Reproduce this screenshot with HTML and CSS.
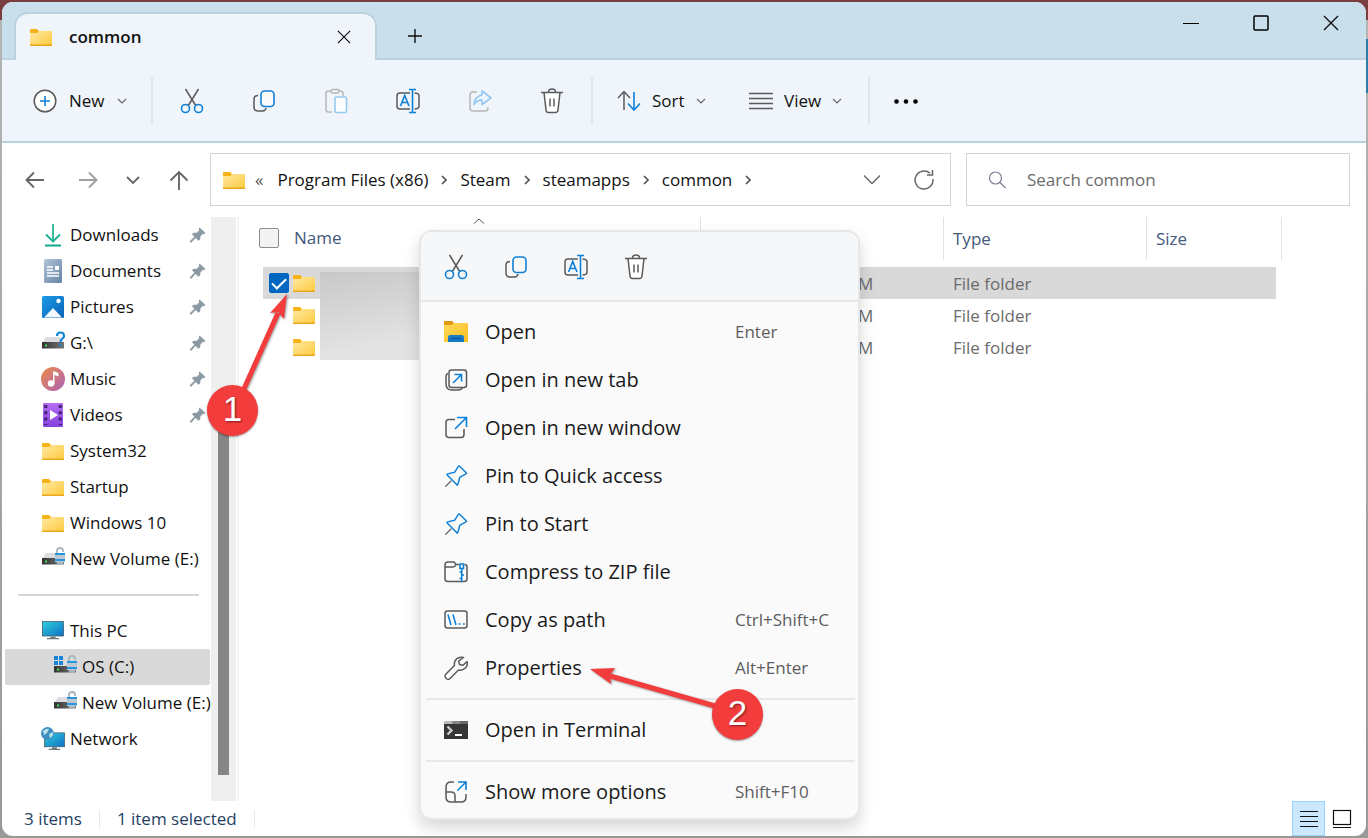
FILE: index.html
```html
<!DOCTYPE html>
<html lang="en">
<head>
<meta charset="utf-8">
<title>common</title>
<link rel="stylesheet" href="styles.css">
</head>
<body>
<svg class="sprite" aria-hidden="true">
  <defs>
    <linearGradient id="gFolder" x1="0" y1="0" x2="1" y2="1"><stop offset="0" stop-color="#ffe8a3"/><stop offset="1" stop-color="#fcca3c"/></linearGradient>
    <linearGradient id="gOpen" x1="0" y1="0" x2="1" y2="1"><stop offset="0" stop-color="#ffd95a"/><stop offset="1" stop-color="#f9bd22"/></linearGradient>
    <linearGradient id="gDoc" x1="0" y1="0" x2="1" y2="1"><stop offset="0" stop-color="#b4c6d8"/><stop offset="1" stop-color="#6484a6"/></linearGradient>
    <linearGradient id="gPic" x1="0" y1="0" x2="1" y2="1"><stop offset="0" stop-color="#1c9be8"/><stop offset="1" stop-color="#0a62b5"/></linearGradient>
    <linearGradient id="gMusic" x1="0" y1="0" x2="1" y2="1"><stop offset="0" stop-color="#f08a4b"/><stop offset="1" stop-color="#a863b4"/></linearGradient>
    <linearGradient id="gVideo" x1="0" y1="0" x2="0" y2="1"><stop offset="0" stop-color="#b56cf5"/><stop offset="1" stop-color="#8544dd"/></linearGradient>
    <linearGradient id="gScreen" x1="0" y1="0" x2="1" y2="1"><stop offset="0" stop-color="#2fd0dc"/><stop offset="1" stop-color="#0f6fc4"/></linearGradient>
    <linearGradient id="gBody" x1="0" y1="0" x2="1" y2="0"><stop offset="0" stop-color="#333"/><stop offset="1" stop-color="#777"/></linearGradient>
  </defs>
  <symbol id="folder" viewBox="0 0 22 18"><path d="M0 1.5Q0 1 1 1h6l2 2h12q1 0 1 1v2H0z" fill="#f5b317"/><path d="M0 5h7.5l1.5-2H22v15H0z" fill="url(#gFolder)"/><path d="M0 17.3h22" stroke="#e9a61d" stroke-width="1.4"/></symbol>
  <symbol id="cut" viewBox="0 0 24 26"><path d="M5.500 1 16 18M18.500 1 8 18" class="s"/><circle cx="5.500" cy="20.500" r="4" class="b"/><circle cx="18.500" cy="20.500" r="4" class="b"/></symbol>
  <symbol id="copy" viewBox="0 0 24 24"><path d="M6 6.500C3 6.500 2 8 2 10v8q0 4 4 4h4.500q3 0 3.500-3" class="s"/><rect x="9" y="2" width="13" height="15.500" rx="3.500" class="b" style="fill:#fafafa"/></symbol>
  <symbol id="paste" viewBox="0 0 24 26"><path d="M8 3H4.500Q2 3 2 5.500v16Q2 24 4.500 24H8M14 3h2.500Q19 3 19 5.500V8" stroke="#bbb" stroke-width="1.600" fill="none"/><rect x="7" y="1.500" width="8" height="3.500" rx="1.700" fill="#fafafa" stroke="#b3b3b3" stroke-width="1.500"/><rect x="11" y="9" width="11.500" height="15.500" rx="1.500" fill="#fbfdff" stroke="#98c9ef" stroke-width="1.600"/></symbol>
  <symbol id="rename" viewBox="0 0 26 26"><path d="M15 5H5Q2 5 2 8v10q0 3 3 3h10M19.500 5Q24 5 24 8v10q0 3-4.500 3" class="s"/><path d="M5.500 18 9.700 7.500 14 18M7 14.500h5.500M14 1.500h7M17.500 1.500v23M14 24.500h7" class="b"/></symbol>
  <symbol id="share" viewBox="0 0 24 24"><path d="M9 3H5Q2 3 2 6v13q0 3 3 3h12q3 0 3-3.500" stroke="#b8b8b8" stroke-width="1.600" fill="none"/><path d="M14 2v4C9 7 6.500 10 6 15.500c2-3 5-4.500 8-4.500v4.500L23 8.800z" fill="#eef7ff" stroke="#8fc6f2" stroke-width="1.600" stroke-linejoin="round"/></symbol>
  <symbol id="bin" viewBox="0 0 24 26"><path d="M4 4.500 6 22q.3 2.500 2.500 2.500h7Q17.700 24.500 18 22l2-17.500" class="s" style="fill:#fff"/><path d="M1 4.500h22M8.500 4Q8.500 1 12 1t3.500 3M10 10.500v8M14 10.500v8" class="s"/></symbol>
  <symbol id="chev" viewBox="0 0 10 6"><path d="m1 1 4 4 4-4" fill="none" stroke="#666" stroke-width="1.100"/></symbol>
  <symbol id="crumb" viewBox="0 0 6 10"><path d="m1 1 4 4-4 4" fill="none" stroke="#555" stroke-width="1.700"/></symbol>
  <symbol id="x" viewBox="0 0 16 16"><path d="m1 1 14 14M15 1 1 15" fill="none" stroke="#111" stroke-width="1.400"/></symbol>
  <symbol id="pin" viewBox="0 0 16 16"><path d="M9.500.500 15.500 6l-1 1-1.500-.2-2.700 2.800c.5 2-.3 3.200-1.600 4.200L5.500 11 1.500 15.500H0V14l4.400-4.200L2 7.200C3.300 5.800 4.500 5.500 6.500 6l2.800-3-.5-1.500z" fill="#8c9aa3"/></symbol>
  <symbol id="drive" viewBox="0 0 24 20"><path d="M4 6h14l4 6H0z" fill="#dcdde0"/><path d="M0 11h22v6.500H0z" fill="url(#gBody)"/><rect x="3" y="13.500" width="2" height="2" fill="#3de04a"/></symbol>
  <symbol id="lock" viewBox="0 0 12 20"><path d="M3 6V3.500Q3 1 6 1t3 2.500V5" fill="none" stroke="#a9b4bd" stroke-width="1.800"/><ellipse cx="6" cy="14.500" rx="3.500" ry="3.500" fill="#a8b5c0"/><rect x="1" y="6" width="10" height="9" fill="#bcc7cf"/><path d="M1 7h10M1 13h10" stroke="#2596dc" stroke-width="1.800"/></symbol>
  <symbol id="monitor" viewBox="0 0 24 20"><rect x="1.500" y="1.500" width="21" height="14.500" fill="url(#gScreen)" stroke="#41606f" stroke-width=".8"/><path d="M9.500 16.500h5V18H18v1.300H6V18h3.500z" fill="#6d777e"/></symbol>
  <symbol id="pinline" viewBox="0 0 26 26"><path d="M8 18 1.500 24.500" class="s"/><path d="M15.500 2.500q.7-.7 1.500 0l7 7q.7.700-.2 1.300L17 14.500q-.7 4.500-2.500 8.500L3.500 12q-.7-.9.500-1.300L11.500 9z" class="b" stroke-linejoin="round"/></symbol>
</svg>

<main class="window">
  <header class="titlebar">
    <div class="tab">
      <svg class="folder"><use href="#folder"/></svg>
      <span class="tab-name">common</span>
      <button class="plain" aria-label="Close tab"><svg class="i14"><use href="#x"/></svg></button>
    </div>
    <button class="plain add" aria-label="New tab"><svg class="i16" viewBox="0 0 16 16"><path d="M8 1v14M1 8h14" stroke="#111" stroke-width="1.400"/></svg></button>
    <div class="caption">
      <button class="plain" aria-label="Minimize"><svg class="i16" viewBox="0 0 16 16"><path d="M0 8.500h16" stroke="#000"/></svg></button>
      <button class="plain" aria-label="Maximize"><svg class="i16" viewBox="0 0 16 16"><rect x="1" y="1" width="14" height="14" rx="1" fill="none" stroke="#000" stroke-width="1.500"/></svg></button>
      <button class="plain" aria-label="Close"><svg class="i16"><use href="#x"/></svg></button>
    </div>
  </header>

  <div class="toolbar">
    <button class="tool new"><svg class="i24" viewBox="0 0 24 24"><circle cx="12" cy="12" r="10.800" class="s" style="fill:#fff"/><path d="M12 7v10M7 12h10" class="b"/></svg><span>New</span><svg class="chev"><use href="#chev"/></svg></button>
    <div class="icons">
      <button class="tool" aria-label="Cut"><svg class="i24t"><use href="#cut"/></svg></button>
      <button class="tool" aria-label="Copy"><svg class="i24"><use href="#copy"/></svg></button>
      <button class="tool" aria-label="Paste" disabled><svg class="i24t"><use href="#paste"/></svg></button>
      <button class="tool" aria-label="Rename"><svg class="i26"><use href="#rename"/></svg></button>
      <button class="tool" aria-label="Share" disabled><svg class="i24"><use href="#share"/></svg></button>
      <button class="tool" aria-label="Delete"><svg class="i24t"><use href="#bin"/></svg></button>
    </div>
    <div class="views">
      <button class="tool sort"><svg class="i24" viewBox="0 0 24 24"><path d="M7 21V3M1 9l6-6.500L13 9" class="s"/><path d="M17 3v18M11 14.500l6 6.500 6-6.500" class="b"/></svg><span>Sort</span><svg class="chev"><use href="#chev"/></svg></button>
      <button class="tool view"><svg class="i24" viewBox="0 0 24 24"><path d="M0 4.500h24M0 9.500h24M0 14.500h24M0 19.500h24" class="s"/></svg><span>View</span><svg class="chev"><use href="#chev"/></svg></button>
    </div>
    <button class="tool more" aria-label="See more"><svg class="i26" viewBox="0 0 26 26"><circle cx="3.500" cy="13.500" r="2.300"/><circle cx="13" cy="13.500" r="2.300"/><circle cx="22.500" cy="13.500" r="2.300"/></svg></button>
  </div>

  <div class="location">
    <div class="history">
      <button class="plain" aria-label="Back"><svg class="i20" viewBox="0 0 20 20"><path d="M19 10H2M9 2.500 1.500 10 9 17.500" class="n"/></svg></button>
      <button class="plain" aria-label="Forward" disabled><svg class="i20" viewBox="0 0 20 20"><path d="M1 10h17M11 2.500l7.500 7.500-7.500 7.500" class="n off"/></svg></button>
      <button class="plain small" aria-label="Recent locations"><svg class="i14" viewBox="0 0 14 14"><path d="m1 4 6 6 6-6" class="n"/></svg></button>
      <button class="plain" aria-label="Up"><svg class="i20" viewBox="0 0 20 20"><path d="M10 20V2M1.500 10.500 10 2l8.500 8.500" class="n"/></svg></button>
    </div>
    <nav class="address" aria-label="Address">
      <svg class="folder"><use href="#folder"/></svg>
      <span class="back">«</span>
      <a href="#">Program Files (x86)</a><svg class="crumb"><use href="#crumb"/></svg>
      <a href="#">Steam</a><svg class="crumb"><use href="#crumb"/></svg>
      <a href="#">steamapps</a><svg class="crumb"><use href="#crumb"/></svg>
      <a href="#">common</a><svg class="crumb"><use href="#crumb"/></svg>
      <span class="address-end">
        <button class="plain" aria-label="Previous locations"><svg class="i18" viewBox="0 0 18 18"><path d="m1 4.500 8 8 8-8" fill="none" stroke="#666" stroke-width="1.400"/></svg></button>
        <button class="plain" aria-label="Refresh"><svg class="i20" viewBox="0 0 20 20"><path d="M19 9a9 9 0 1 1-3-5.700M18.500 0v5h-5.500" fill="none" stroke="#666" stroke-width="1.500"/></svg></button>
      </span>
    </nav>
    <label class="search"><svg class="i18" viewBox="0 0 18 18"><circle cx="7.500" cy="7" r="6" fill="none" stroke="#7c8090" stroke-width="1.200"/><path d="m12 11.500 5.500 5.500" stroke="#7c8090" stroke-width="1.300"/></svg><input type="search" placeholder="Search common" aria-label="Search common"></label>
  </div>

  <div class="body">
    <nav class="tree" aria-label="Folders">
      <a href="#"><svg class="i24" viewBox="0 0 24 24"><path d="M5 11.500l7 7 7-7" fill="none" stroke="#1bb094" stroke-width="1.900"/><path d="M4 22.500h16" stroke="#12a88f" stroke-width="1.800"/><path d="M12 1v17" stroke="#22b794" stroke-width="1.800"/></svg><span>Downloads</span><svg class="i16"><use href="#pin"/></svg></a>
      <a href="#"><svg class="i24" viewBox="0 0 24 24"><rect x="3" width="18" height="24" rx="1.500" fill="url(#gDoc)"/><path d="M6 8h6M6 11h6M6 14h12M6 17h12" stroke="#fff" stroke-width="1.300"/><path d="M14 7h4v4h-4z" fill="#fff"/></svg><span>Documents</span><svg class="i16"><use href="#pin"/></svg></a>
      <a href="#"><svg class="i24" viewBox="0 0 24 24"><rect x="1" y="1" width="22" height="22" rx="1.500" fill="url(#gPic)"/><path d="M3 22.500 12 13l9 9.500z" fill="#f5f9ff"/><circle cx="17.500" cy="6" r="2.200" fill="#fff"/></svg><span>Pictures</span><svg class="i16"><use href="#pin"/></svg></a>
      <a href="#"><svg class="i24" viewBox="0 0 24 24"><use href="#drive" x="1" width="24" height="20"/><path d="M16 5q0-3.500 3.500-3.500T23 5c0 3-3.500 2.500-3.500 6M19.500 12.500v2.500" fill="none" stroke="#1586d6" stroke-width="2.200"/></svg><span>G:\</span><svg class="i16"><use href="#pin"/></svg></a>
      <a href="#"><svg class="i24" viewBox="0 0 24 24"><circle cx="12" cy="12" r="12" fill="url(#gMusic)"/><circle cx="10" cy="16.500" r="3.200" fill="#fff"/><path d="M12 17V4l5.500 2v3.500L13.500 8v9z" fill="#fff"/></svg><span>Music</span><svg class="i16"><use href="#pin"/></svg></a>
      <a href="#"><svg class="i24" viewBox="0 0 24 24"><rect x="2" width="20" height="24" rx="1" fill="url(#gVideo)"/><path d="M4.800 2v20M19.200 2v20" stroke="#402273" stroke-width="3" stroke-dasharray="3 3.300"/><path d="m9 7 8 5-8 5z" fill="#fff"/></svg><span>Videos</span><svg class="i16"><use href="#pin"/></svg></a>
      <a href="#"><svg class="folder"><use href="#folder"/></svg><span>System32</span></a>
      <a href="#"><svg class="folder"><use href="#folder"/></svg><span>Startup</span></a>
      <a href="#"><svg class="folder"><use href="#folder"/></svg><span>Windows 10</span></a>
      <a href="#"><svg class="i24" viewBox="0 0 24 24"><use href="#drive" x="1" width="24" height="20"/><use href="#lock" x="13" width="12" height="20"/></svg><span>New Volume (E:)</span></a>
      <hr>
      <a href="#"><svg class="i24" viewBox="0 0 24 24"><use href="#monitor" width="24" height="20" y="1"/></svg><span>This PC</span></a>
      <a href="#" class="child active"><svg class="i24" viewBox="0 0 24 24"><use href="#drive" x="1" width="24" height="20"/><path d="M0 0h11v10H0z" fill="#d9d9d9"/><path d="M1 1h4v4H1zM6 1h4v4H6zM1 6h4v4H1zM6 6h4v4H6z" fill="#1786d8"/><use href="#lock" x="13" width="12" height="20"/></svg><span>OS (C:)</span></a>
      <a href="#" class="child"><svg class="i24" viewBox="0 0 24 24"><use href="#drive" x="1" width="24" height="20"/><use href="#lock" x="13" width="12" height="20"/></svg><span>New Volume (E:)</span></a>
      <a href="#"><svg class="i24" viewBox="0 0 24 24"><use href="#monitor" x="2" y="4" width="23" height="20"/><circle cx="6.500" cy="6.500" r="6.500" fill="#3c8fc0"/><path d="M2 4q3-3 6-2L6 6 3 8zM8 7l4-2q1 4-3 6z" fill="#b7e0ee"/></svg><span>Network</span></a>
    </nav>
    <div class="scroll"><div class="thumb"></div></div>

    <section class="files">
      <table>
        <colgroup><col class="c-name"><col class="c-date"><col class="c-type"><col class="c-size"></colgroup>
        <thead><tr>
          <th><span class="cell"><input type="checkbox" aria-label="Select all"><span>Name</span></span><svg class="sorted" viewBox="0 0 12 6"><path d="m1 5.500 5-4.500 5 4.500" fill="none" stroke="#555"/></svg></th>
          <th></th><th>Type</th><th>Size</th>
        </tr></thead>
        <tbody>
          <tr class="selected"><td><span class="cell"><input type="checkbox" checked aria-label="Select item"><svg class="folder"><use href="#folder"/></svg></span></td><td class="date">M</td><td>File folder</td><td></td></tr>
          <tr><td><span class="cell nocheck"><svg class="folder"><use href="#folder"/></svg></span></td><td class="date">M</td><td>File folder</td><td></td></tr>
          <tr><td><span class="cell nocheck"><svg class="folder"><use href="#folder"/></svg></span></td><td class="date">M</td><td>File folder</td><td></td></tr>
        </tbody>
      </table>
      <div class="redacted"></div>
    </section>
  </div>

  <footer class="status">
    <span>3 items</span><span>1 item selected</span>
    <div class="modes">
      <button class="on" aria-label="Details"><svg class="i20" viewBox="0 0 20 20"><path d="M1 2.500h18M1 7.500h18M1 12.500h18M1 17.500h18" stroke="#111" stroke-width="1.200"/></svg></button>
      <button aria-label="Large icons"><svg class="i20" viewBox="0 0 20 20"><rect x="1.500" y="1.500" width="17" height="14" fill="#fff" stroke="#111" stroke-width="1.200"/><path d="M1 18.500h18" stroke="#111"/></svg></button>
    </div>
  </footer>
</main>

<div class="menu" role="menu">
  <div class="menu-bar">
    <button class="tool" aria-label="Cut"><svg class="i24t"><use href="#cut"/></svg></button>
    <button class="tool" aria-label="Copy"><svg class="i24"><use href="#copy"/></svg></button>
    <button class="tool" aria-label="Rename"><svg class="i26"><use href="#rename"/></svg></button>
    <button class="tool" aria-label="Delete"><svg class="i24t"><use href="#bin"/></svg></button>
  </div>
  <div class="menu-list">
    <button role="menuitem"><svg class="i24" viewBox="0 0 24 24"><path d="M0 1h8l2 2-2 3H0z" fill="#dd9a0d"/><path d="M0 5h7.500L10 3h14v19H0z" fill="url(#gOpen)"/><path d="M4 22v-4.500Q4 15 6.500 15h11q2.500 0 2.500 2.500V22z" fill="#1479c9"/><path d="M7.500 18.500h9" stroke="#0b4a86" stroke-width="1.200"/></svg><span>Open</span><kbd>Enter</kbd></button>
    <button role="menuitem"><svg class="i24" viewBox="0 0 24 24"><path d="M4 5.500Q2 6 2 9v7q0 6 6 6h6q3.500 0 4.500-2.500" class="s"/><rect x="5" y="2" width="17.500" height="17.500" rx="2.500" class="s"/><path d="m9 15 8-8M10.500 6.500h7v7" class="b"/></svg><span>Open in new tab</span></button>
    <button role="menuitem"><svg class="i24" viewBox="0 0 24 24"><path d="M11 3.500H5Q2 3.500 2 6.500v12q0 3 3 3h12q3 0 3-3V13" class="s"/><path d="M11 13 22 2M13 1.500h9.500V11" class="b"/></svg><span>Open in new window</span></button>
    <button role="menuitem"><svg class="i24"><use href="#pinline"/></svg><span>Pin to Quick access</span></button>
    <button role="menuitem"><svg class="i24"><use href="#pinline"/></svg><span>Pin to Start</span></button>
    <button role="menuitem"><svg class="i24" viewBox="0 0 24 24"><path d="M15 4.500h-3L10 2H4Q1 2 1 5v14q0 2.500 3 2.500h16q3 0 3-2.500V7q0-2.500-2.500-2.500M1 7h8q2 0 3-2.500" class="s"/><path d="M16 4h3.500v4.500H16zM17.700 8.500V22M15.500 12h2.200M17.700 15H20M15.500 18.500h2.200" class="b"/></svg><span>Compress to ZIP file</span></button>
    <button role="menuitem"><svg class="i24" viewBox="0 0 24 24"><rect x="1" y="3" width="22" height="17" rx="2.500" class="s"/><path d="m4 6.500 3 10.500M9 6.500 12 17M14.500 16h1.800M19 16h1.800" class="b"/></svg><span>Copy as path</span><kbd>Ctrl+Shift+C</kbd></button>
    <button role="menuitem"><svg class="i24" viewBox="0 0 24 24"><path d="M19.500 1.500C14 0 9.500 4 10.500 9.500L2 18c-3 3 1.500 7 4 4.500l8.500-8.500C20 15 24.500 10.500 23 5.500L19 9.300l-3.500-.8-.8-3.500z" class="s" stroke-linejoin="round"/></svg><span>Properties</span><kbd>Alt+Enter</kbd></button>
    <hr>
    <button role="menuitem"><svg class="i24" viewBox="0 0 24 24"><path d="M0 3h24v18H0z" fill="#363636"/><path d="M0 3h8v3H0z" fill="#bbb"/><path d="M8 3h8v3H8z" fill="#888"/><path d="M16 3h8v3h-8z" fill="#666"/><path d="m3.500 8.500 4 4-4 4" fill="none" stroke="#ccc" stroke-width="2.400"/><path d="M11 17h7" stroke="#fff" stroke-width="2"/></svg><span>Open in Terminal</span></button>
    <hr>
    <button role="menuitem"><svg class="i24" viewBox="0 0 24 24"><path d="M10 2H7Q2 2 2 7v10q0 5 5 5h10q5 0 5-5v-3M2 12h5q4 0 4 4v6" class="s"/><path d="m13.500 10.500 8-8M14 2h8v8" class="b"/></svg><span>Show more options</span><kbd>Shift+F10</kbd></button>
  </div>
</div>

<svg class="arrows" viewBox="0 0 1368 838" aria-hidden="true">
  <path d="M243 391 278 313" stroke="#f33c3c" stroke-width="5"/>
  <path d="M287 294 284 319 278 312 270 313z" fill="#f33c3c"/>
  <path d="M715 706 610 676" stroke="#f33c3c" stroke-width="5"/>
  <path d="m590 669 25-1-5 7 1 9z" fill="#f33c3c"/>
</svg>
<span class="step one">1</span>
<span class="step two">2</span>
</body>
</html>
```
FILE: styles.css
```css
* { box-sizing: border-box; }
body {
  margin: 0;
  height: 100vh;
  padding: 2px;
  overflow: hidden;
  position: relative;
  display: flex;
  font: 17px/24px "Open Sans", "Noto Sans", sans-serif;
  color: #111;
  background:
    linear-gradient(#2d7ea6, #2d7ea6) right 39px / 2px 54px no-repeat,
    linear-gradient(#7b3e40 0 20px, #b4b4b4 20px, #989898);
}
.sprite { position: absolute; width: 0; height: 0; }
svg { display: block; flex: none; }
button { font: inherit; color: inherit; background: none; border: 0; padding: 0; margin: 0; }
a { color: inherit; text-decoration: none; }
.s { fill: none; stroke: #5a5a5a; stroke-width: 1.5; }
.b { fill: none; stroke: #0f80d8; stroke-width: 1.6; }
.n { fill: none; stroke: #666; stroke-width: 1.9; }
.n.off { stroke: #9f9f9f; }
.i14 { width: 14px; height: 14px; }
.i16 { width: 16px; height: 16px; }
.i18 { width: 18px; height: 18px; }
.i20 { width: 20px; height: 20px; }
.i24 { width: 24px; height: 24px; }
.i24t { width: 24px; height: 26px; }
.i26 { width: 26px; height: 26px; }
.folder { width: 22px; height: 18px; }
.chev { width: 10px; height: 6px; }
.crumb { width: 6px; height: 10px; }
.plain { display: flex; align-items: center; justify-content: center; }

.window {
  flex: 1;
  min-width: 0;
  display: flex;
  flex-direction: column;
  background: #fff;
  border-radius: 11px;
  overflow: hidden;
}
.titlebar {
  display: flex;
  height: 58px;
  padding: 10px 0 0 12px;
  background: #c9dfec;
  border-bottom: 2px solid #bdd1df;
}
.tab {
  display: flex;
  align-items: center;
  width: 363px;
  height: 48px;
  padding: 0 24px 0 14px;
  background: #eff5fa;
  border: 2px solid #bdd1df;
  border-bottom: 0;
  border-radius: 14px 14px 0 0;
}
.tab-name { flex: 1; padding-left: 17px; font-weight: 600; }
.add { width: 76px; height: 48px; }
.caption { display: flex; margin: -10px 0 0 auto; }
.caption .plain { width: 70px; height: 42px; }

.toolbar {
  display: flex;
  align-items: center;
  height: 83px;
  background: #eff5fa;
  border-bottom: 2px solid #bad1de;
}
.tool { display: flex; align-items: center; justify-content: center; height: 48px; }
.tool.new { justify-content: flex-start; width: 149px; padding-left: 31px; gap: 12px; }
.icons { display: flex; padding: 0 3px; border: solid #dfe6eb; border-width: 0 2px; }
.icons .tool { width: 72px; }
.views { display: flex; border-right: 2px solid #dfe6eb; }
.sort, .view { gap: 11px; justify-content: flex-start; padding-left: 24px; }
.sort { width: 132px; }
.view { width: 143px; }
.more { width: 71px; }

.location { display: flex; align-items: center; padding: 10px 16px 10px 0; }
.history { display: flex; width: 208px; padding-left: 6px; }
.history .plain { width: 53px; height: 48px; }
.history .small { width: 38px; }
.address, .search {
  display: flex;
  align-items: center;
  height: 53px;
  border: 1px solid #d4d4d4;
}
.address { flex: 1; min-width: 0; gap: 13px; padding-left: 12px; margin-right: 15px; white-space: nowrap; }
.back { margin: 0 1px 0 -3px; color: #555; }
.address-end { display: flex; margin-left: auto; }
.address-end .plain { width: 52px; height: 48px; }
.search { width: 384px; padding: 0 21px; gap: 21px; }
.search input { flex: 1; min-width: 0; border: 0; outline: 0; padding: 0; font: inherit; color: #111; background: none; }
.search input::placeholder { color: #6c6c6c; opacity: 1; }

.body { flex: 1; min-height: 0; display: flex; padding-top: 1px; }
.tree { width: 209px; padding: 0 1px 0 3px; white-space: nowrap; }
.tree a { display: flex; align-items: center; gap: 5px; height: 36px; padding: 0 4px 0 36px; border-radius: 2px; }
.tree .folder { margin-left: 1px; }
.tree .folder + span { padding-left: 1px; }
.tree a span { flex: 1; }
.tree .child { padding: 0 0 0 48px; }
.tree .active { background: #d9d9d9; }
.tree hr { height: 2px; margin: 17px 11px 17px 13px; border: 0; background: #d5d5d5; }
.scroll { width: 25px; padding: 193px 7px 26px; background: #efefef; display: flex; }
.thumb { width: 11px; background: #868686; }
.files { position: relative; flex: 1; min-width: 0; margin-left: 1px; padding-left: 20px; border-left: 2px solid #f4f4f4; overflow: hidden; }
table { table-layout: fixed; width: 1023px; border-collapse: separate; border-spacing: 0; }
.c-name { width: 442px; }
.c-date { width: 243px; }
.c-type { width: 203px; }
.c-size { width: 135px; }
th { position: relative; height: 43px; padding: 0 9px; border-right: 1px solid #e2e2e2; font-weight: 400; text-align: left; color: #44597c; }
th:first-child { padding: 0 0 2px; }
th .cell { gap: 15px; }
.sorted { position: absolute; left: 214px; top: 1px; width: 12px; height: 6px; }
thead::after { content: ""; display: block; height: 7px; }
td { height: 32px; padding: 2px 9px 0; color: #6b6b6b; }
td:first-child { padding: 0 0 0 6px; border-left: 4px solid transparent; background-clip: padding-box; }
td:last-child { border-right: 6px solid transparent; background-clip: padding-box; }
td.date { padding-left: 157px; }
.selected td { background-color: #d9d9d9; }
.cell { display: flex; align-items: center; gap: 4px; }
.nocheck { padding-left: 24px; }
input[type="checkbox"] { appearance: none; flex: none; width: 20px; height: 20px; margin: 0; border: 1px solid #8b8b8b; border-radius: 2px; background: #f3f3f3; }
input[type="checkbox"]:checked { border-color: #0067c0; background: #0067c0; display: grid; place-items: center; }
input[type="checkbox"]:checked::after { content: ""; width: 12px; height: 6px; margin-bottom: 3px; border: solid #fff; border-width: 0 0 2px 2px; transform: rotate(-45deg); }
.redacted { position: absolute; left: 81px; top: 55px; width: 101px; height: 88px; background: linear-gradient(170deg, #c8c8c8, #e3e3e3 80%); }

.status { display: flex; align-items: center; height: 35px; padding-left: 22px; color: #253f63; }
.status > span { padding-right: 17px; margin-right: 17px; border-right: 1px solid #e8e8e8; line-height: 18px; }
.modes { display: flex; margin-left: auto; padding-right: 8px; }
.modes button { display: grid; place-items: center; width: 33px; height: 35px; border: 1px solid transparent; }
.modes .on { background: #cce8ff; border-color: #99d1ff; }

.menu {
  position: absolute;
  left: 419px;
  top: 230px;
  width: 441px;
  background: #fafafa;
  border: 2px solid #e7e7e7;
  border-radius: 13px;
  box-shadow: 0 8px 16px rgba(0, 0, 0, .16);
}
.menu-bar { display: flex; gap: 12px; height: 70px; padding: 11px 11px 9px; background: #f5f7f8; border-bottom: 2px solid #e5e6e7; border-radius: 11px 11px 0 0; }
.menu-bar .tool { width: 48px; }
.menu-list { padding: 6px 0 2px; color: #1a1a1a; }
.menu-list button { display: flex; align-items: center; width: 100%; height: 48px; padding-left: 23px; text-align: left; font-size: 20px; }
.menu-list span { width: 250px; margin-left: 17px; }
.menu-list kbd { font: 17px/24px "Open Sans", "Noto Sans", sans-serif; color: #5d5d5d; }
.menu-list hr { height: 2px; margin: 6px 3px 6px 5px; border: 0; background: #e7e7e7; }

.arrows { position: absolute; left: 0; top: 0; width: 1368px; height: 838px; pointer-events: none; filter: drop-shadow(1px 1px 1px rgba(0, 0, 0, .4)); }
.step {
  position: absolute;
  width: 51px;
  height: 51px;
  border-radius: 50%;
  background: #f33c3c;
  color: #fff;
  font: 35px/48px "Liberation Sans", sans-serif;
  text-align: center;
  text-shadow: 1px 1px 2px rgba(0, 0, 0, .5);
  box-shadow: 0 1px 2px rgba(0, 0, 0, .4);
}
.one { left: 207px; top: 385px; }
.two { left: 712px; top: 689px; }
```
